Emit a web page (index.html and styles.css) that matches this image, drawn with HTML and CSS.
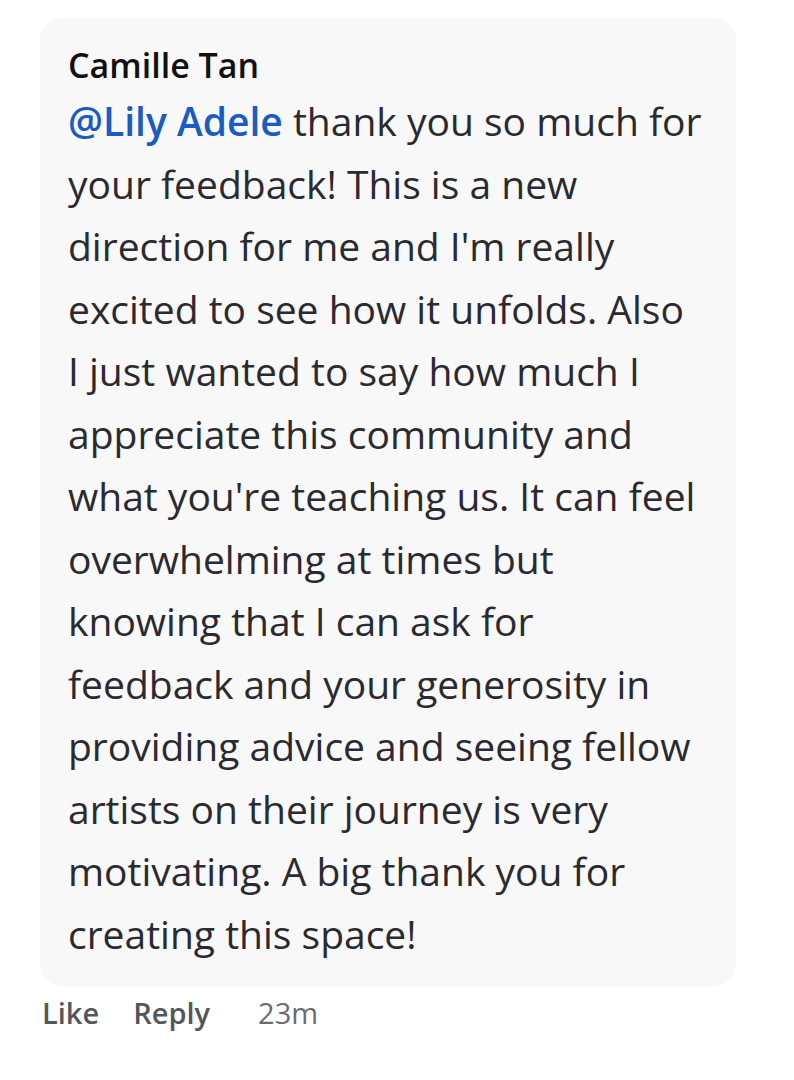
FILE: index.html
```html
<!DOCTYPE html>
<html>
<head>
<meta charset="utf-8">
<link rel="stylesheet" href="styles.css">
</head>
<body>
<div class="comment">
  <div class="bubble">
    <div class="author">Camille Tan</div>
    <p class="text"><span class="mention">@Lily Adele</span> thank you so much for your feedback! This is a new direction for me and I'm really excited to see how it unfolds. Also I just wanted to say how much I appreciate this community and what you're teaching us. It can feel overwhelming at times but knowing that I can ask for feedback and your generosity in providing advice and seeing fellow artists on their journey is very motivating. A big thank you for creating this space!</p>
  </div>
  <div class="actions">
    <span class="action">Like</span>
    <span class="action">Reply</span>
    <span class="time">23m</span>
  </div>
</div>
</body>
</html>
```
FILE: styles.css
```css
html, body {
  margin: 0;
  padding: 0;
  background: #ffffff;
}
body {
  font-family: "Open Sans", "Noto Sans", sans-serif;
}
.comment {
  padding: 18px 0 0 40px;
  width: 696px;
}
.bubble {
  background: #f8f8f8;
  border-radius: 22px;
  padding: 26px 32px 21px 28px;
}
.author {
  font-size: 34px;
  line-height: 42px;
  font-weight: 600;
  color: #111111;
}
.text {
  margin: 4px 0 0 0;
  font-size: 39px;
  line-height: 62.5px;
  color: #2a2a30;
}
.mention {
  color: #1a5bc4;
  font-weight: 600;
}
.actions {
  display: flex;
  gap: 34px;
  padding: 7px 0 0 2px;
  font-size: 29px;
  line-height: 40px;
  align-items: baseline;
}
.action {
  font-weight: 600;
  color: #55565c;
}
.time {
  margin-left: 14px;
  color: #6a6b70;
}
```
